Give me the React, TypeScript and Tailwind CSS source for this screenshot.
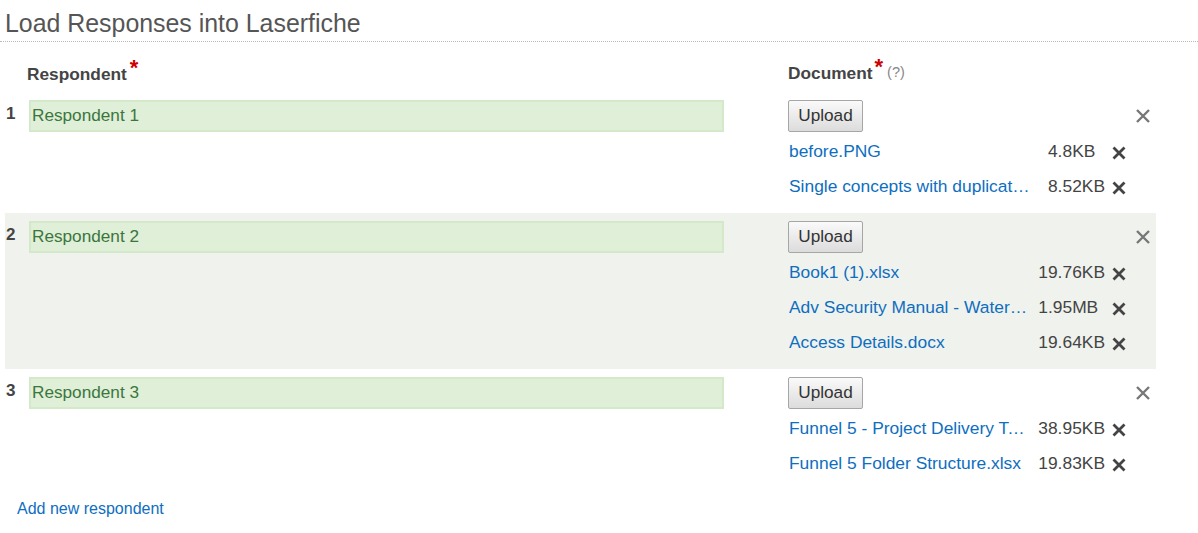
import React from "react";

type FileItem = { name: string; size: string };
type Row = { n: number; name: string; files: FileItem[]; shaded?: boolean };

const rows: Row[] = [
  {
    n: 1,
    name: "Respondent 1",
    files: [
      { name: "before.PNG", size: "4.8KB" },
      { name: "Single concepts with duplicates.xlsx", size: "8.52KB" },
    ],
  },
  {
    n: 2,
    name: "Respondent 2",
    shaded: true,
    files: [
      { name: "Book1 (1).xlsx", size: "19.76KB" },
      { name: "Adv Security Manual - Watermarked.pdf", size: "1.95MB" },
      { name: "Access Details.docx", size: "19.64KB" },
    ],
  },
  {
    n: 3,
    name: "Respondent 3",
    files: [
      { name: "Funnel 5 - Project Delivery Template.docx", size: "38.95KB" },
      { name: "Funnel 5 Folder Structure.xlsx", size: "19.83KB" },
    ],
  },
];

function RowX() {
  return (
    <svg width="16" height="16" viewBox="0 0 16 16" className="block">
      <path d="M2 2 L14 14 M14 2 L2 14" stroke="#777" strokeWidth="2.4" fill="none" />
    </svg>
  );
}

function FileX() {
  return (
    <svg width="14" height="14" viewBox="0 0 14 14" className="block">
      <path d="M1.5 1.5 L12.5 12.5 M12.5 1.5 L1.5 12.5" stroke="#444" strokeWidth="2.8" fill="none" />
    </svg>
  );
}

export default function App() {
  return (
    <div
      className="w-[1198px] h-[533px] bg-white text-[#444] overflow-hidden"
      style={{ fontFamily: '"Liberation Sans", Arial, sans-serif' }}
    >
      <div className="border-b border-dotted border-[#bbb] pl-[5px] pt-[8px] pb-[3px]">
        <h1 className="text-[24.9px] leading-[30px] text-[#555] font-normal">
          Load Responses into Laserfiche
        </h1>
      </div>

      <div className="ml-[5px] w-[1151px]">
        <div className="flex mt-[21px] mb-[9px] h-[20px] items-center">
          <div className="w-[783px] pl-[22px] text-[17.3px] font-bold leading-[20px] text-[#444]">
            Respondent
            <span className="text-[#c00] text-[22px] font-bold relative top-[-5px] ml-[3px]">*</span>
          </div>
          <div className="text-[17.3px] font-bold leading-[20px] text-[#444]">
            Document
            <span className="text-[#c00] text-[22px] font-bold relative top-[-5px] ml-[2px]">*</span>
            <span className="text-[14.5px] font-normal text-[#888] relative top-[-2px] ml-[4px]">(?)</span>
          </div>
        </div>

        {rows.map((r) => (
          <div
            key={r.n}
            className={`flex pt-[8px] pb-[11px] ${r.shaded ? "bg-[#f0f2ed]" : ""}`}
          >
            <div className="w-[24px] pl-[1px] pt-[4px] text-[17px] font-bold leading-[20px] text-[#444]">
              {r.n}
            </div>
            <div className="w-[695px] h-[32px] border-2 border-[#d3e9c9] bg-[#dfefd8] pl-[1px] flex items-center text-[17.2px] text-[#3c763d]">
              {r.name}
            </div>
            <div className="ml-[64px] flex">
              <div className="w-[342px]">
                <button className="w-[75px] h-[32px] border border-[#a6a6a6] rounded-[2px] bg-gradient-to-b from-[#fafafa] to-[#dcdcdc] text-[17.2px] text-[#333] leading-none">
                  Upload
                </button>
                <div className="grid grid-cols-[minmax(0,1fr)_auto_25px]">
                  {r.files.map((f) => (
                    <React.Fragment key={f.name}>
                      <div className="h-[35px] pt-[3px] pr-[10px] pl-[1px] flex items-center min-w-0">
                        <span className="truncate text-[17.4px] text-[#0e6ebf]">{f.name}</span>
                      </div>
                      <div className="h-[35px] pt-[3px] flex items-center text-[17.4px] text-[#444]">
                        {f.size}
                      </div>
                      <div className="h-[35px] pt-[6px] pl-[7px] flex items-center">
                        <FileX />
                      </div>
                    </React.Fragment>
                  ))}
                </div>
              </div>
              <div className="ml-[5px] mt-[8px]">
                <RowX />
              </div>
            </div>
          </div>
        ))}
      </div>

      <div className="pl-[17px] mt-[9px] text-[16px] leading-[20px] text-[#0e6ebf]">
        Add new respondent
      </div>
    </div>
  );
}
